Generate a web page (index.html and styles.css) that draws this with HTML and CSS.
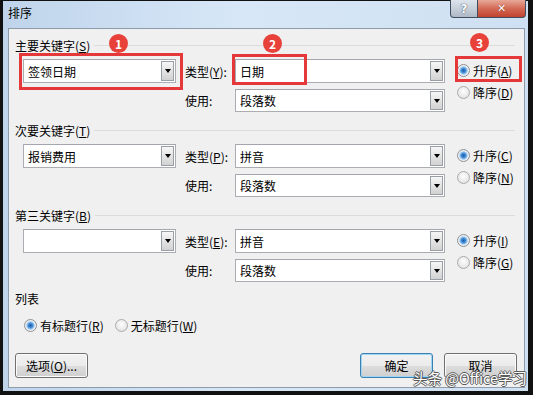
FILE: index.html
```html
<!DOCTYPE html>
<html lang="zh-CN">
<head>
  <meta charset="UTF-8">
  <title>排序</title>
  <link rel="stylesheet" href="styles.css">
</head>
<body>

<div class="window">
  <div class="titlebar">
    <span class="title">排序</span>
    <div class="caption-btns">
      <span class="cap-btn help">?</span>
      <span class="cap-btn close">✕</span>
    </div>
  </div>

  <div class="client">
    <section class="key-group">
      <div class="group-head"><span>主要关键字(<u>S</u>)</span><i class="rule"></i></div>
      <div class="key-grid">
        <div class="combo key"><span class="val">签领日期</span><span class="drop"></span></div>
        <span class="lbl">类型(<u>Y</u>):</span>
        <div class="combo wide"><span class="val">日期</span><span class="drop"></span></div>
        <div class="order">
          <div class="radio"><i class="dot on"></i><span>升序(<u>A</u>)</span></div>
          <div class="radio"><i class="dot"></i><span>降序(<u>D</u>)</span></div>
        </div>
        <span class="lbl second">使用:</span>
        <div class="combo wide second"><span class="val">段落数</span><span class="drop"></span></div>
      </div>
    </section>

    <section class="key-group">
      <div class="group-head"><span>次要关键字(<u>T</u>)</span><i class="rule"></i></div>
      <div class="key-grid">
        <div class="combo key"><span class="val">报销费用</span><span class="drop"></span></div>
        <span class="lbl">类型(<u>P</u>):</span>
        <div class="combo wide"><span class="val">拼音</span><span class="drop"></span></div>
        <div class="order">
          <div class="radio"><i class="dot on"></i><span>升序(<u>C</u>)</span></div>
          <div class="radio"><i class="dot"></i><span>降序(<u>N</u>)</span></div>
        </div>
        <span class="lbl second">使用:</span>
        <div class="combo wide second"><span class="val">段落数</span><span class="drop"></span></div>
      </div>
    </section>

    <section class="key-group">
      <div class="group-head"><span>第三关键字(<u>B</u>)</span><i class="rule"></i></div>
      <div class="key-grid">
        <div class="combo key"><span class="val"></span><span class="drop"></span></div>
        <span class="lbl">类型(<u>E</u>):</span>
        <div class="combo wide"><span class="val">拼音</span><span class="drop"></span></div>
        <div class="order">
          <div class="radio"><i class="dot on"></i><span>升序(<u>I</u>)</span></div>
          <div class="radio"><i class="dot"></i><span>降序(<u>G</u>)</span></div>
        </div>
        <span class="lbl second">使用:</span>
        <div class="combo wide second"><span class="val">段落数</span><span class="drop"></span></div>
      </div>
    </section>

    <div class="group-head list-head"><span>列表</span></div>
    <div class="list-opts">
      <div class="radio"><i class="dot on"></i><span>有标题行(<u>R</u>)</span></div>
      <div class="radio"><i class="dot"></i><span>无标题行(<u>W</u>)</span></div>
    </div>

    <div class="footer">
      <button class="btn">选项(<u>O</u>)...</button>
      <div class="footer-right">
        <button class="btn default">确定</button>
        <button class="btn">取消</button>
      </div>
    </div>
  </div>

  <!-- annotations drawn over the dialog -->
  <div class="mark box1"></div>
  <div class="mark box2"></div>
  <div class="mark box3"></div>
  <span class="badge n1">1</span>
  <span class="badge n2">2</span>
  <span class="badge n3">3</span>
  <span class="watermark">头条 @Office学习</span>
</div>

</body>
</html>
```

FILE: styles.css
```css
body {
  margin: 0;
  font-family: "Noto Sans CJK SC", "Liberation Sans", sans-serif;
  font-size: 12px;
  color: #000;
}

.window {
  position: relative;
  width: 533px;
  height: 395px;
  box-sizing: border-box;
  border-style: solid;
  border-color: #111;
  border-width: 1px 5px 4px 3px;
  background: linear-gradient(to right, #bfd4eb, #d7e7f7 45%, #cfe0f2);
  display: flex;
  flex-direction: column;
}

.titlebar {
  height: 27px;
  display: flex;
  justify-content: space-between;
  align-items: flex-start;
  padding-left: 5px;
}

.title {
  line-height: 24px;
}

.caption-btns {
  display: flex;
  margin-top: -1px;
  margin-right: 2px;
}

.cap-btn {
  height: 18px;
  box-sizing: border-box;
  border: 1px solid #3f4d5e;
  border-top: none;
  display: flex;
  align-items: center;
  justify-content: center;
  color: #fff;
  font-weight: bold;
  font-family: "DejaVu Sans", sans-serif;
}

.help {
  width: 28px;
  border-radius: 0 0 0 4px;
  background: linear-gradient(#dde4ec, #c6cfd9 50%, #aeb9c6);
  font-size: 12px;
  text-shadow: 0 0 1px #44546a, 0 0 1px #44546a;
}

.close {
  width: 48px;
  border-left: none;
  border-radius: 0 0 4px 0;
  background: linear-gradient(#e8a898, #d36a55 50%, #c1432f);
  font-size: 11px;
  text-shadow: 0 0 1px #6a1a10;
}

.client {
  flex: 1;
  margin: 0 3px 3px 5px;
  padding: 8px 6px 0 6px;
  background-color: #f0f0f0;
  border: 1px solid #8d9bab;
}

.group-head {
  display: flex;
  align-items: center;
  height: 16px;
  gap: 4px;
}

.rule {
  flex: 1;
  border-top: 1px solid #dcdcdc;
  margin-right: 3px;
}

u {
  text-decoration: underline;
  text-underline-offset: 1px;
}

.key-grid {
  display: grid;
  margin: 6px 0 10px 8px;
  grid-template-columns: 162px 50px 222px auto;
  grid-template-rows: 24px 23px;
  row-gap: 6px;
}

.combo {
  display: flex;
  align-items: stretch;
  box-sizing: border-box;
  background-color: #fff;
  border: 1px solid #abadb3;
  border-top-color: #a3a6ad;
}

.combo.key {
  width: 153px;
}

.combo.wide {
  width: 210px;
  grid-column: 3;
}

.combo .val {
  flex: 1;
  display: flex;
  align-items: center;
  padding-left: 4px;
}

.drop {
  width: 13px;
  margin: 1px;
  box-sizing: border-box;
  border: 1px solid #9a9ea6;
  background: linear-gradient(#f6f6f6, #e4e4e4 50%, #d2d2d2);
  display: flex;
  align-items: center;
  justify-content: center;
}

.drop::after {
  content: "";
  border-left: 3px solid transparent;
  border-right: 3px solid transparent;
  border-top: 4px solid #000;
}

.lbl {
  grid-column: 2;
  align-self: center;
}

.second {
  grid-row: 2;
}

.order {
  grid-column: 4;
  grid-row: 1 / span 2;
  display: flex;
  flex-direction: column;
  gap: 6px;
  padding-top: 3px;
}

.radio {
  display: flex;
  align-items: center;
  height: 16px;
  gap: 3px;
  white-space: nowrap;
}

.dot {
  flex: none;
  width: 13px;
  height: 13px;
  box-sizing: border-box;
  border-radius: 50%;
  border: 1px solid #a9abad;
  background: radial-gradient(circle at 50% 40%, #fdfdfd, #dcdcdc);
}

.dot.on {
  border-color: #8e9094;
  background: radial-gradient(circle, #1c5aa6 0, #3f86d0 2px, #8cc2ef 3.5px, #e6ebf1 4.5px, #f6f6f6 6px);
}

.list-head {
  margin-top: -2px;
}

.list-opts {
  display: flex;
  gap: 11px;
  margin-top: 11px;
  padding-left: 9px;
}

.footer {
  display: flex;
  justify-content: space-between;
  margin-top: 20px;
  padding-right: 1px;
}

.footer-right {
  display: flex;
  gap: 11px;
}

.btn {
  width: 73px;
  height: 25px;
  padding: 0;
  font-family: inherit;
  font-size: 12px;
  color: #000;
  border: 1px solid #707070;
  border-radius: 3px;
  background: linear-gradient(#f2f2f2, #ebebeb 50%, #dddddd 51%, #cfcfcf);
  box-shadow: inset 0 0 0 1px #fbfbfb;
}

.btn.default {
  border-color: #3c7fb1;
  box-shadow: inset 0 0 0 1px #9fd6f3;
}

.mark {
  position: absolute;
  border: 3px solid #e5383b;
  box-sizing: border-box;
}

.box1 { left: 16px; top: 52px; width: 164px; height: 37px; }
.box2 { left: 229px; top: 53px; width: 75px; height: 31px; }
.box3 { left: 452px; top: 55px; width: 67px; height: 26px; }

.badge {
  position: absolute;
  width: 19px;
  height: 19px;
  border-radius: 50%;
  background-color: #e8413a;
  color: #fff;
  font-weight: bold;
  font-size: 12px;
  display: flex;
  align-items: center;
  justify-content: center;
}

.n1 { left: 106px; top: 33px; }
.n2 { left: 260px; top: 33px; }
.n3 { left: 467px; top: 32px; }

.watermark {
  position: absolute;
  left: 410px;
  top: 366px;
  font-size: 14.5px;
  color: #fff;
  white-space: nowrap;
  text-shadow: -1px 0 #5a5a5a, 1px 0 #5a5a5a, 0 -1px #5a5a5a, 0 1px #5a5a5a;
}
```
